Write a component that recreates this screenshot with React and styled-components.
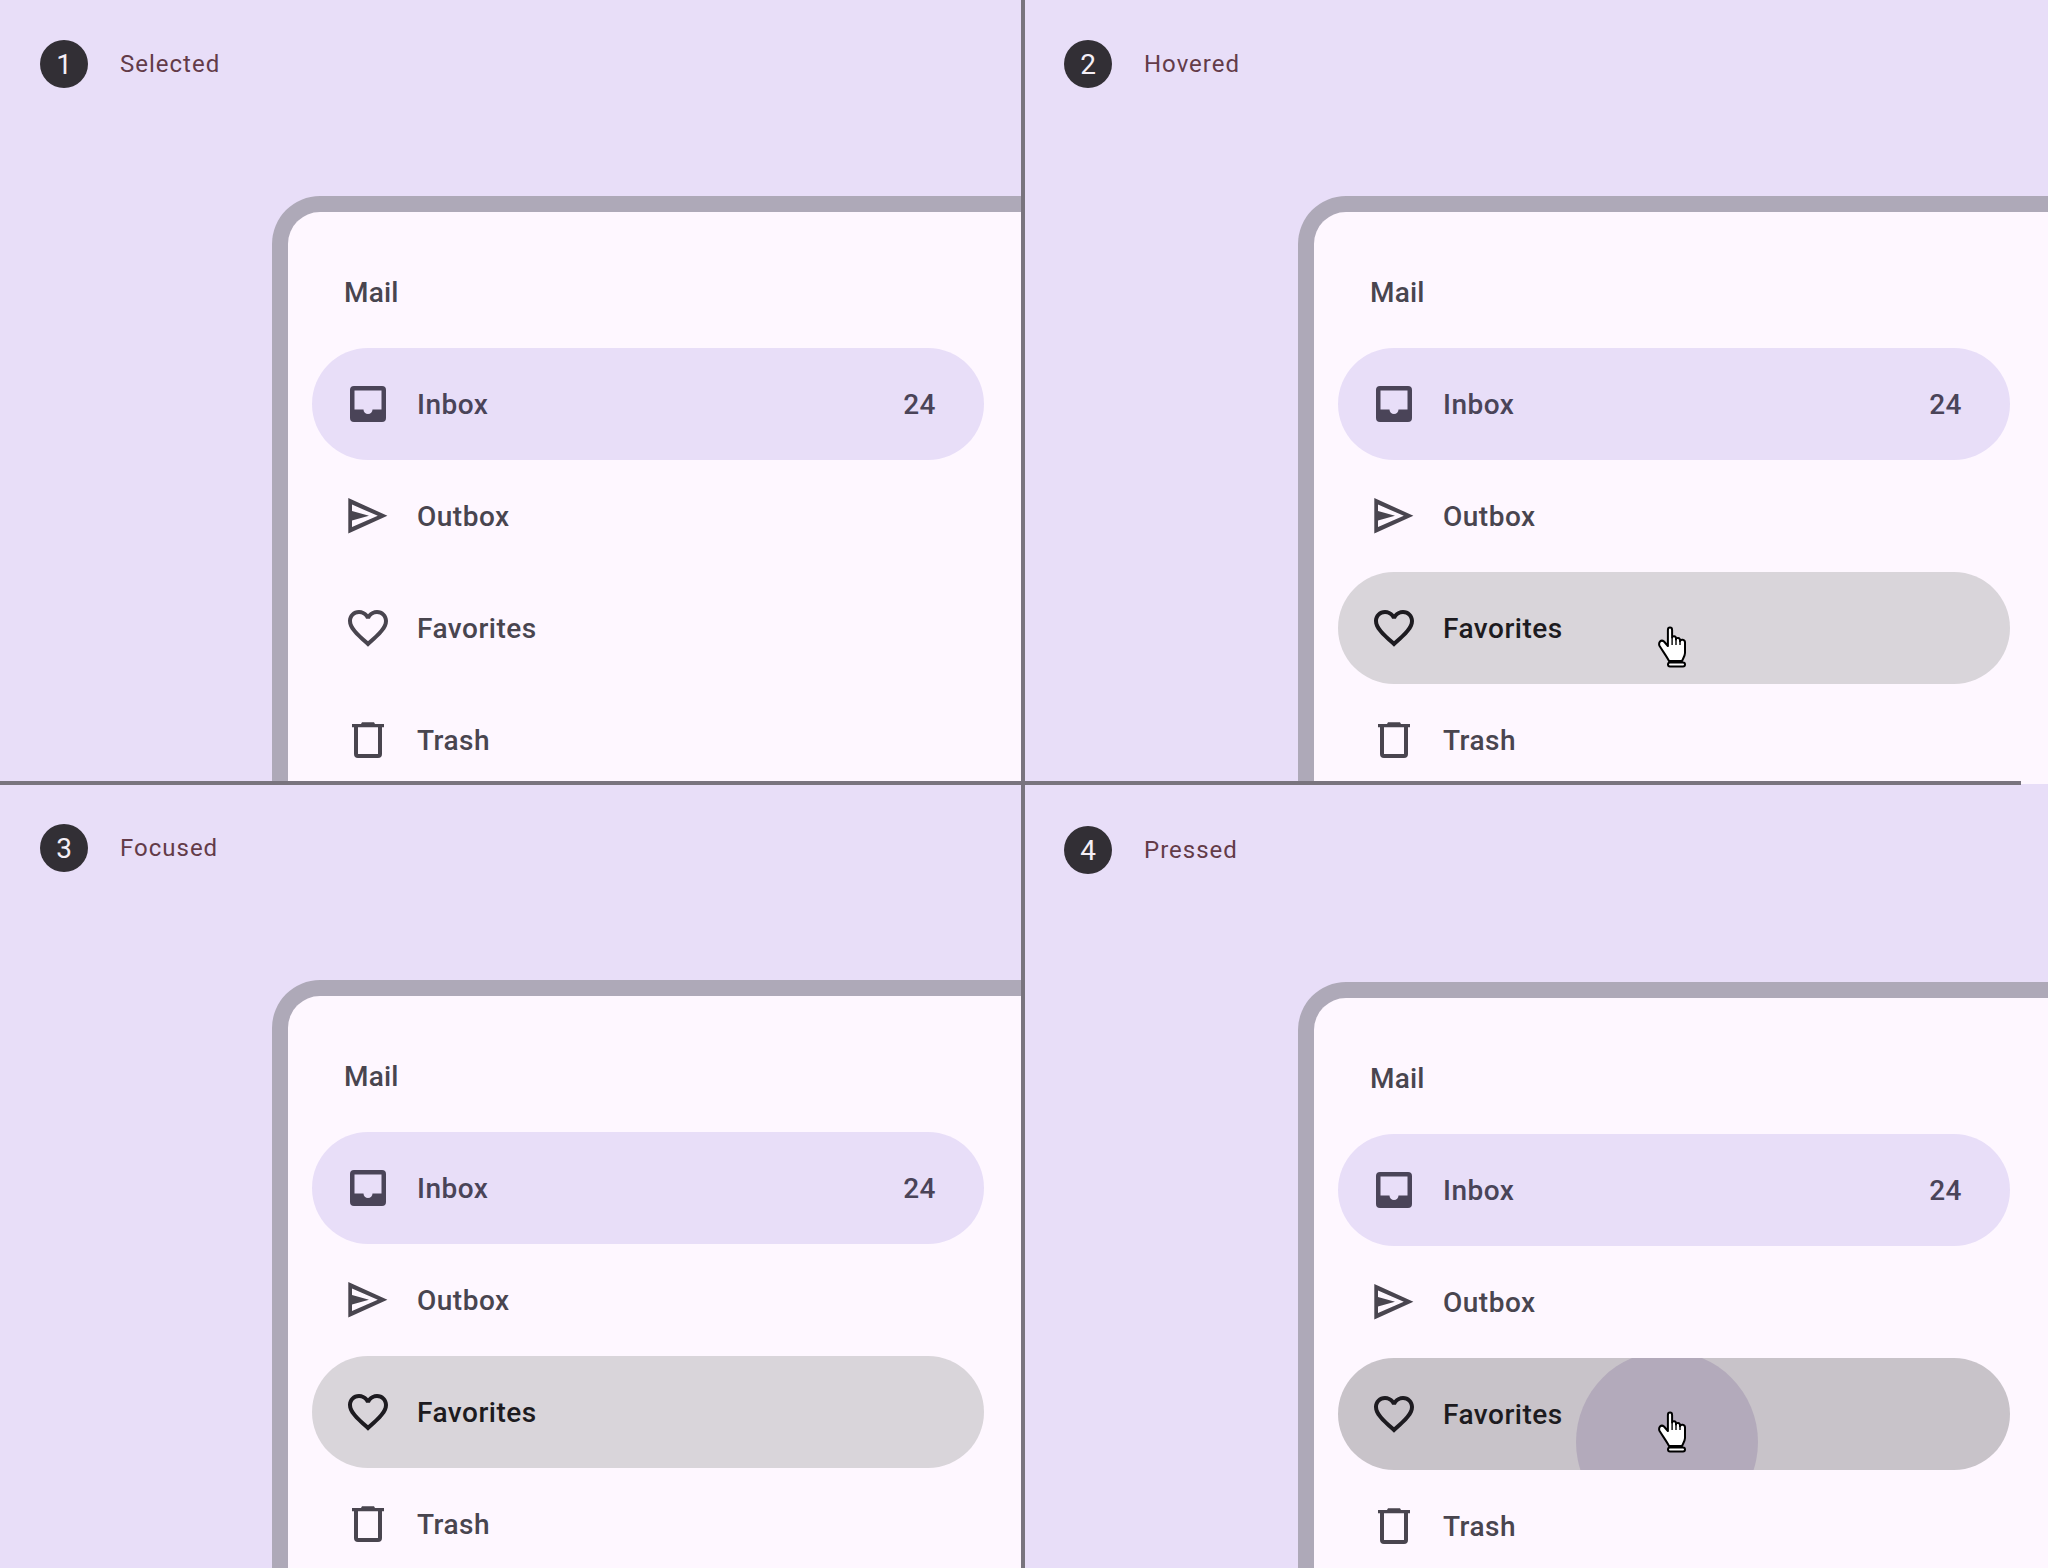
import React from 'react';
import styled, { createGlobalStyle } from 'styled-components';

const Global = createGlobalStyle`
  html, body { margin: 0; padding: 0; background: #E8DEF8; }
  body { font-family: Roboto, "Noto Sans", sans-serif; }
`;

const Stage = styled.main`
  position: relative;
  width: 2048px;
  height: 1568px;
  overflow: hidden;
  display: grid;
  grid-template-columns: 1024px 1024px;
  grid-template-rows: 784px 784px;
  background: #E8DEF8;
`;

const Quadrant = styled.section`
  overflow: hidden;
  padding-top: ${p => p.$top}px;
  box-sizing: border-box;
  height: 784px;
`;

const Header = styled.header`
  display: flex;
  align-items: center;
  gap: 32px;
  padding-left: 40px;
  height: 48px;
`;

const Badge = styled.span`
  display: flex;
  align-items: center;
  justify-content: center;
  width: 48px;
  height: 48px;
  border-radius: 50%;
  background: #322F35;
  color: #F5EFF7;
  font-size: 28px;
`;

const Caption = styled.span`
  color: #633B48;
  font-size: 24px;
  letter-spacing: 1px;
`;

const Frame = styled.div`
  margin-top: 108px;
  margin-left: ${p => p.$left}px;
  width: 900px;
  height: 700px;
  box-sizing: border-box;
  border: 16px solid #AEA9B8;
  border-right: 0;
  border-bottom: 0;
  border-top-left-radius: 48px;
  background: #FEF7FF;
  padding: 53px 0 0 24px;
`;

const Title = styled.h2`
  margin: 0 0 27px;
  height: 56px;
  line-height: 56px;
  padding-left: 32px;
  font-size: 28px;
  font-weight: 500;
  letter-spacing: 0.2px;
  color: #49454F;
`;

const rowTheme = {
  selected: { bg: '#E8DEF8', fg: '#4A4458' },
  idle: { bg: 'transparent', fg: '#49454F' },
  hover: { bg: '#D9D5DA', fg: '#1D1B20' },
  pressed: { bg: '#C8C3C9', fg: '#1D1B20' },
};

const Row = styled.div`
  position: relative;
  overflow: hidden;
  display: flex;
  align-items: center;
  gap: 25px;
  width: 672px;
  height: 112px;
  padding: 0 48px 0 32px;
  box-sizing: border-box;
  border-radius: 56px;
  background: ${p => rowTheme[p.$state].bg};
  color: ${p => rowTheme[p.$state].fg};
  font-size: 28px;
  font-weight: 500;
  letter-spacing: 0.5px;
`;

const RowLabel = styled.span`
  position: relative;
  flex: 1;
`;

const Count = styled.span`
  position: relative;
`;

const IconBox = styled.svg`
  position: relative;
  flex: none;
  width: 48px;
  height: 48px;
  fill: currentColor;
`;

const Ripple = styled.span`
  position: absolute;
  left: 238px;
  top: -7px;
  width: 182px;
  height: 182px;
  border-radius: 50%;
  background: #B3AABB;
`;

const CursorBox = styled.svg`
  position: absolute;
  left: 320px;
  top: ${p => p.$top}px;
  width: 29px;
  height: 42px;
`;

const VerticalBar = styled.div`
  position: absolute;
  left: 1021px;
  top: 0;
  width: 4px;
  height: 1568px;
  background: #79747E;
`;

const HorizontalBar = styled.div`
  position: absolute;
  left: 0;
  top: 781px;
  width: 2021px;
  height: 4px;
  background: #79747E;
`;

const InboxIcon = () => (
  <IconBox viewBox="0 0 48 48">
    <path fillRule="evenodd" d="M10 6H38a4 4 0 0 1 4 4V38a4 4 0 0 1-4 4H10a4 4 0 0 1-4-4V10a4 4 0 0 1 4-4ZM10.5 10.5V29.5H19.5a4.5 4.5 0 0 0 9 0H37.5V10.5Z" />
  </IconBox>
);

const OutboxIcon = () => (
  <IconBox viewBox="0 0 48 48">
    <path fillRule="evenodd" d="M4.3 6L43.4 23.8L4.3 41.6ZM8 12.6L33.8 23.8L8 35V28.6L25 23.8L8 19Z" />
  </IconBox>
);

const HeartIcon = () => (
  <IconBox viewBox="0 0 24 24">
    <path d="M16.5 3c-1.74 0-3.41.81-4.5 2.09C10.91 3.81 9.24 3 7.5 3 4.42 3 2 5.42 2 8.5c0 3.78 3.4 6.86 8.55 11.54L12 21.35l1.45-1.32C18.6 15.36 22 12.28 22 8.5 22 5.42 19.58 3 16.5 3zm-4.4 15.55l-.1.1-.1-.1C7.14 14.24 4 11.39 4 8.5 4 6.5 5.5 5 7.5 5c1.54 0 3.04.99 3.57 2.36h1.87C13.46 5.99 14.96 5 16.5 5c2 0 3.5 1.5 3.5 3.5 0 2.89-3.14 5.74-7.9 10.05z" />
  </IconBox>
);

const TrashIcon = () => (
  <IconBox viewBox="0 0 48 48">
    <path fillRule="evenodd" d="M18 6.3H30L31 8H40V11.3H38V38a4 4 0 0 1-4 4H14a4 4 0 0 1-4-4V11.3H8V8H17ZM14 11.3V38H34V11.3Z" />
  </IconBox>
);

const HandCursor = ({ top }) => (
  <CursorBox $top={top} viewBox="0 0 29 42">
    <path
      d="M9.9 4C9.9 0.8 14.1 0.8 14.1 4V11.5C14.1 9.8 18 9.8 18 12.3V13.5C18 11.3 22 11.3 22 14.2V15.2C22.5 13 27 13 27 16.5V27C27 30 25.2 32.5 24 35H11C9 31 6 27 1.6 20C0 16.5 3 13 6 15.5L9.9 20Z"
      fill="#fff"
      stroke="#000"
      strokeWidth="2"
      strokeLinejoin="round"
    />
    <path d="M14.1 11.5V19M18 13V19M22 15V19" fill="none" stroke="#000" strokeWidth="1.4" />
    <rect x="10" y="36.5" width="17" height="4" rx="2" fill="#fff" stroke="#000" strokeWidth="2" />
  </CursorBox>
);

const panels = [
  { n: 1, label: 'Selected', state: 'idle', top: 40, left: 272 },
  { n: 2, label: 'Hovered', state: 'hover', top: 40, left: 274, cursor: 54 },
  { n: 3, label: 'Focused', state: 'hover', top: 40, left: 272 },
  { n: 4, label: 'Pressed', state: 'pressed', top: 42, left: 274, cursor: 53, ripple: true },
];

const Panel = ({ panel }) => (
  <Quadrant $top={panel.top}>
    <Header>
      <Badge>{panel.n}</Badge>
      <Caption>{panel.label}</Caption>
    </Header>
    <Frame $left={panel.left}>
      <Title>Mail</Title>
      <Row $state="selected">
        <InboxIcon />
        <RowLabel>Inbox</RowLabel>
        <Count>24</Count>
      </Row>
      <Row $state="idle">
        <OutboxIcon />
        <RowLabel>Outbox</RowLabel>
      </Row>
      <Row $state={panel.state}>
        {panel.ripple && <Ripple />}
        <HeartIcon />
        <RowLabel>Favorites</RowLabel>
        {panel.cursor && <HandCursor top={panel.cursor} />}
      </Row>
      <Row $state="idle">
        <TrashIcon />
        <RowLabel>Trash</RowLabel>
      </Row>
    </Frame>
  </Quadrant>
);

export default function App() {
  return (
    <Stage>
      <Global />
      {panels.map(p => <Panel key={p.n} panel={p} />)}
      <VerticalBar />
      <HorizontalBar />
    </Stage>
  );
}
